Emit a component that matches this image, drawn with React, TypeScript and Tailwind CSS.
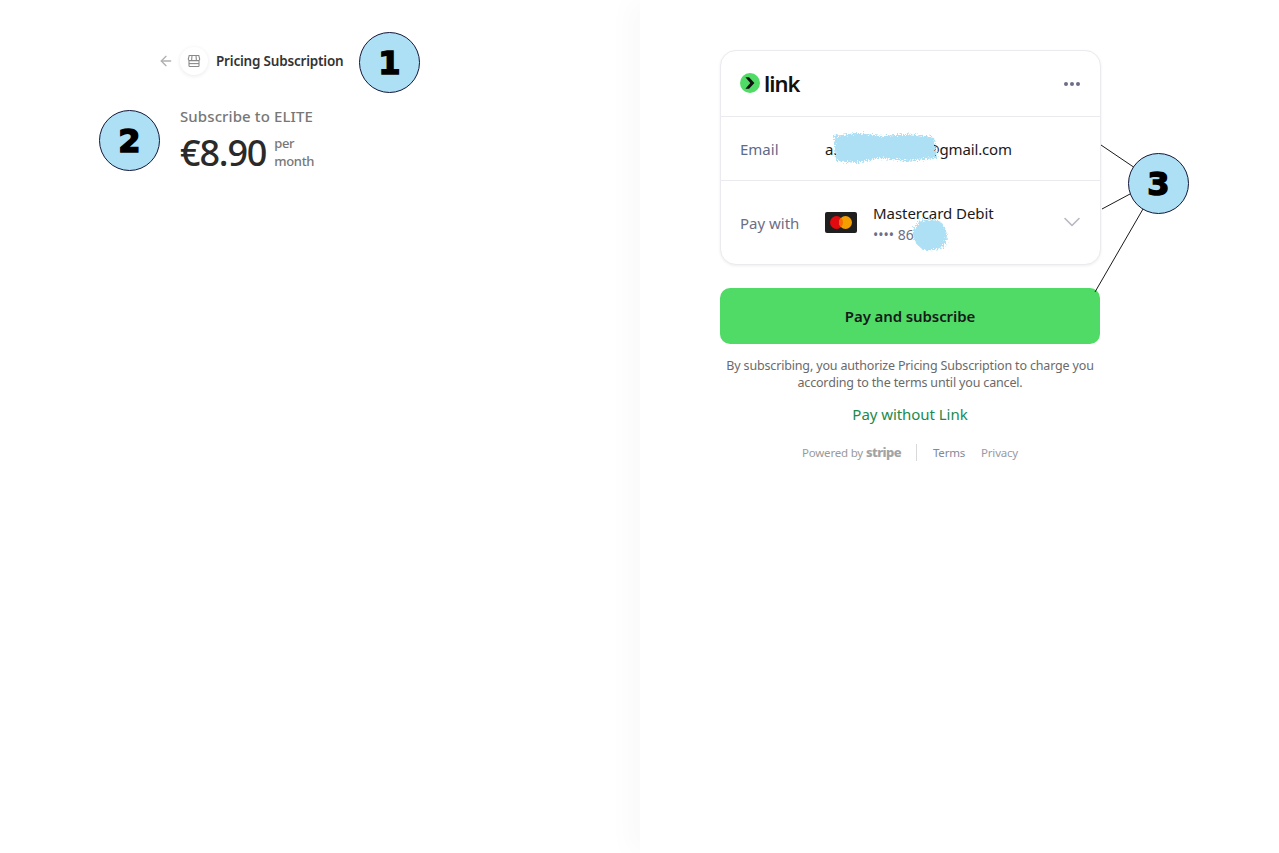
import { ArrowLeft, ChevronDown } from 'lucide-react';

const font = { sans: 'font-["Noto_Sans",sans-serif]' };

function Badge({ n, className }: { n: string; className: string }) {
  return (
    <div className={`absolute w-[61px] h-[61px] rounded-full bg-[#aee0f5] border-[1.5px] border-[#14163a] flex items-center justify-center text-[32px] leading-none font-bold text-black font-["DejaVu_Sans",sans-serif] [-webkit-text-stroke:1.5px_black] ${className}`}>
      {n}
    </div>
  );
}

// the hand-painted smudges that hide private data
function Smudge({ className, w, h, d }: { className: string; w: number; h: number; d: string }) {
  return (
    <svg className={`absolute ${className}`} width={w} height={h} viewBox={`0 0 ${w} ${h}`}>
      <defs>
        <filter id={`rough-${w}`} x="-10%" y="-10%" width="120%" height="120%">
          <feTurbulence type="fractalNoise" baseFrequency="0.8" numOctaves="2" seed="7" />
          <feDisplacementMap in="SourceGraphic" scale="8" />
        </filter>
      </defs>
      <path d={d} fill="#aee0f5" filter={`url(#rough-${w})`} />
    </svg>
  );
}

function StoreIcon() {
  return (
    <svg width="14" height="14" viewBox="0 0 14 14" fill="none" stroke="#8a8a8a" strokeWidth="1.1">
      <path d="M2.2 1.5h9.6l.9 3.6a1.5 1.5 0 0 1-1.5 1.5H2.8a1.5 1.5 0 0 1-1.5-1.5z" />
      <path d="M5 1.5l-.4 5M9 1.5l.4 5" />
      <path d="M2 6.6v5.1a.8.8 0 0 0 .8.8h8.4a.8.8 0 0 0 .8-.8V6.6" />
      <path d="M2 9.6h10" />
    </svg>
  );
}

function LinkLogo() {
  return (
    <div className="flex items-center gap-1 relative -top-px">
      <svg width="20" height="20" viewBox="0 0 20 20">
        <circle cx="10" cy="10" r="10" fill="#50db66" />
        <path d="M5.4 4.2h3.7l5.3 5.8-5.3 5.8H5.4l4.9-5.8z" fill="#111" />
      </svg>
      <span className='text-[22px] leading-none font-semibold text-[#111] tracking-[-1px] font-["Noto_Sans",sans-serif]'>link</span>
    </div>
  );
}

function MastercardIcon() {
  return (
    <div className="w-8 h-[21px] rounded-[2px] bg-[#1f1f1f] flex items-center justify-center">
      <svg width="22" height="13" viewBox="0 0 22 13">
        <circle cx="6.5" cy="6.5" r="6.5" fill="#e00a0f" />
        <circle cx="15.5" cy="6.5" r="6.5" fill="#f59e00" />
        <path d="M11 1.8a6.5 6.5 0 0 1 0 9.4 6.5 6.5 0 0 1 0-9.4z" fill="#f46a05" />
      </svg>
    </div>
  );
}

export default function App() {
  return (
    <div className={`relative flex h-[853px] w-[1279px] overflow-hidden bg-white ${font.sans}`}>
      {/* Left: summary */}
      <div className="w-[640px] shrink-0 pt-[47px] pl-[158px]">
        <div className="flex items-center h-7">
          <ArrowLeft className="w-4 h-4 text-[#b0b0b0]" strokeWidth={2} />
          <div className="ml-[6px] w-7 h-7 rounded-full bg-white shadow-[0_1px_4px_rgba(0,0,0,0.09)] flex items-center justify-center">
            <StoreIcon />
          </div>
          <span className="ml-2 text-[13.5px] font-semibold text-[#333] tracking-[-0.2px]">Pricing Subscription</span>
        </div>
        <div className="ml-[22px] mt-[31px]">
          <p className="text-[15px] leading-5 font-medium text-[#777] tracking-[0.1px]">Subscribe to ELITE</p>
          <div className="flex items-center mt-[5px]">
            <span className="text-[36px] leading-[44px] font-medium text-[#2a2a2a] tracking-[-1.2px]">€8.90</span>
            <span className="ml-[8px] -mt-[2px] text-[13px] leading-[18px] font-medium text-[#777] tracking-[-0.3px]">per<br />month</span>
          </div>
        </div>
      </div>

      {/* Right: payment */}
      <div className="relative flex-1 pt-[50px] pl-[80px] shadow-[-12px_0_24px_rgba(0,0,0,0.025)] bg-white">
        <div className="w-[381px] rounded-2xl border border-[#ebebef] shadow-[0_1px_3px_rgba(0,0,0,0.07)] bg-white">
          <div className="flex items-center justify-between h-[66px] pl-[19px] pr-5 border-b border-[#ebebef]">
            <LinkLogo />
            <div className="flex gap-[2px]">
              <span className="w-1 h-1 rounded-full bg-[#6d6e85]" />
              <span className="w-1 h-1 rounded-full bg-[#6d6e85]" />
              <span className="w-1 h-1 rounded-full bg-[#6d6e85]" />
            </div>
          </div>
          <div className="relative flex items-center h-[64px] pl-[19px] border-b border-[#ebebef] text-[15px]">
            <span className="w-[85px] text-[#5d6a8a] relative top-px">Email</span>
            <span className="flex text-[#1a1a1a] tracking-[-0.15px] relative top-px">
              a.<span className="w-[89px]" />@gmail.com
            </span>
            <Smudge
              className="left-[105px] top-[11px]"
              w={120}
              h={40}
              d="M8 8 L30 5 L58 8 L80 6 L108 9 L111 30 L80 33 L55 30 L30 35 L10 33 Z"
            />
          </div>
          <div className="relative flex items-center h-[83px] pl-[19px] pr-[14px]">
            <span className="w-[85px] text-[15px] text-[#6d6e85] relative top-px">Pay with</span>
            <MastercardIcon />
            <div className="ml-4 mt-[3px]">
              <p className="text-[15px] leading-5 text-[#1a1a1a] tracking-[-0.05px]">Mastercard Debit</p>
              <p className="text-[14px] leading-[23px] text-[#6d6e85]">•••• 86</p>
            </div>
            <ChevronDown className="ml-auto w-7 h-7 text-[#b8b8c4] relative -top-px" strokeWidth={1.4} />
            <Smudge
              className="left-[181px] top-[32px]"
              w={56}
              h={44}
              d="M17 9 Q30 3 40 10 Q48 20 43 32 Q32 40 20 36 Q9 28 11 17 Z"
            />
          </div>
        </div>

        <button className="mt-[23px] block w-[380px] h-[56px] rounded-[10px] bg-[#50db66] text-[15px] font-semibold text-[#161a1a] tracking-[-0.1px]">
          Pay and subscribe
        </button>
        <p className="mt-[14px] w-[380px] text-center text-[12.5px] leading-[16.5px] text-[#6a6a6a] tracking-[-0.16px]">
          By subscribing, you authorize Pricing Subscription to charge you<br />according to the terms until you cancel.
        </p>
        <p className="mt-[13px] w-[380px] text-center text-[15px] leading-5 text-[#1c8a4c] tracking-[-0.05px]">Pay without Link</p>
        <div className="mt-[19px] w-[380px] flex items-center justify-center text-[11.5px] text-[#9a9a9a] tracking-[-0.2px]">
          <span>Powered by</span>
          <span className="ml-[3px] text-[13px] font-extrabold tracking-[-0.6px] text-[#a3a3a3]">stripe</span>
          <span className="ml-[15px] mr-4 w-px h-[17px] bg-[#d9d9d9]" />
          <span className="text-[#7d8aa0]">Terms</span>
          <span className="ml-4 text-[#9a9aa5]">Privacy</span>
        </div>
      </div>

      {/* Annotation layer */}
      <svg className="absolute inset-0 pointer-events-none" width="1279" height="853">
        <path d="M1101 145 L1135 168 M1102 209 L1130 194 M1095 292 L1143 209" stroke="#1a1a1a" strokeWidth="1" fill="none" />
      </svg>
      <Badge n="1" className="left-[359px] top-[32px]" />
      <Badge n="2" className="left-[99px] top-[110px]" />
      <Badge n="3" className="left-[1128px] top-[153px]" />
    </div>
  );
}
